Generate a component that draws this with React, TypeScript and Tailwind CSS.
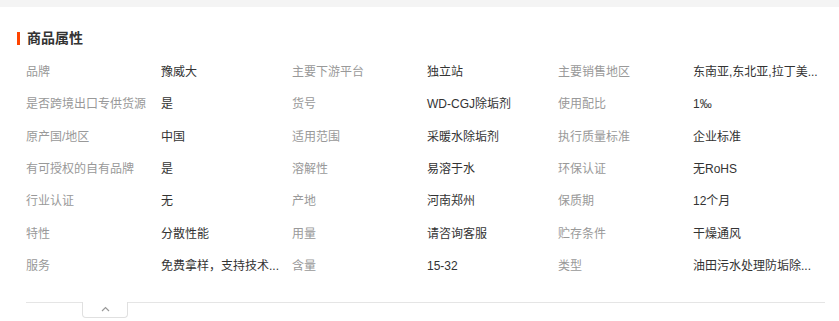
const rows: [string, string][][] = [
  [
    ["品牌", "豫威大"],
    ["主要下游平台", "独立站"],
    ["主要销售地区", "东南亚,东北亚,拉丁美..."],
  ],
  [
    ["是否跨境出口专供货源", "是"],
    ["货号", "WD-CGJ除垢剂"],
    ["使用配比", "1‰"],
  ],
  [
    ["原产国/地区", "中国"],
    ["适用范围", "采暖水除垢剂"],
    ["执行质量标准", "企业标准"],
  ],
  [
    ["有可授权的自有品牌", "是"],
    ["溶解性", "易溶于水"],
    ["环保认证", "无RoHS"],
  ],
  [
    ["行业认证", "无"],
    ["产地", "河南郑州"],
    ["保质期", "12个月"],
  ],
  [
    ["特性", "分散性能"],
    ["用量", "请咨询客服"],
    ["贮存条件", "干燥通风"],
  ],
  [
    ["服务", "免费拿样，支持技术..."],
    ["含量", "15-32"],
    ["类型", "油田污水处理防垢除..."],
  ],
];

export default function App() {
  return (
    <div
      className="w-[839px] h-[321px] bg-white overflow-hidden"
      style={{ fontFamily: '"Liberation Sans", "Noto Sans CJK SC", sans-serif' }}
    >
      <div className="h-[7px] bg-[#f4f4f4]" />
      <div className="pl-[17px] pt-[24px] flex items-center">
        <div className="w-[3px] h-[13px] bg-[#ff4400]" />
        <h3 className="ml-[7px] text-[14px] leading-[14px] font-bold text-[#333]">商品属性</h3>
      </div>
      <div className="pl-[26px] pt-[11px]">
        {rows.map((row, i) => (
          <div key={i} className="flex h-[32.3px] items-center text-[12px] leading-[14px]">
            {row.map(([label, value]) => (
              <div key={label} className="flex w-[266px]">
                <div className="w-[135px] text-[#999] whitespace-nowrap">{label}</div>
                <div className="w-[131px] text-[#333] whitespace-nowrap">{value}</div>
              </div>
            ))}
          </div>
        ))}
      </div>
      <div className="ml-[26px] mt-[20px] w-[799px] border-t border-[#e5e5e5] relative">
        <div className="absolute left-[56px] top-[-1px] w-[46px] h-[16px] bg-white border border-t-0 border-[#e0e0e0] rounded-b-[4px] flex justify-center pt-[4px]">
          <svg width="9" height="6" viewBox="0 0 9 6" fill="none">
            <path d="M1 5 L4.5 1.5 L8 5" stroke="#999" strokeWidth="1.2" />
          </svg>
        </div>
      </div>
    </div>
  );
}
